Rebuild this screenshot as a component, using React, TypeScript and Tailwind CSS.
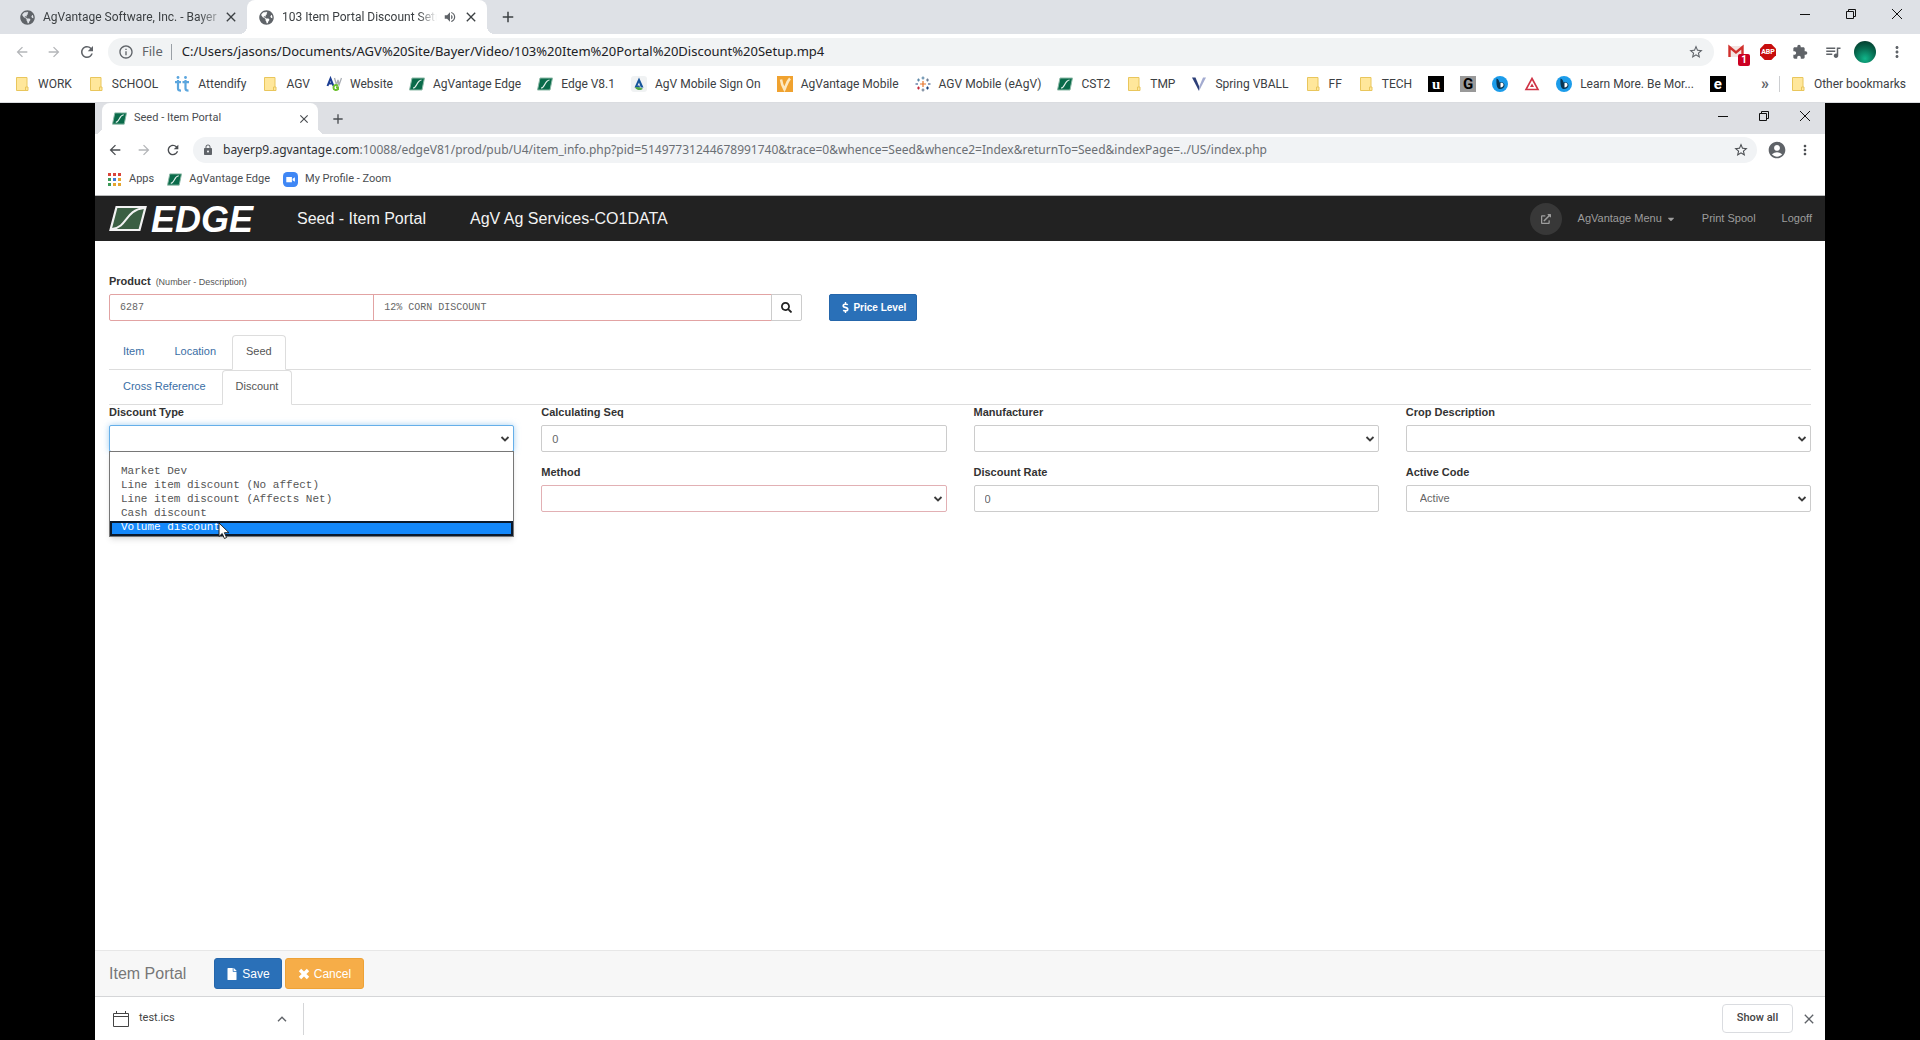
import { ReactNode } from 'react';
import {
  MdAccountCircle,
  MdAdd,
  MdArrowBack,
  MdArrowForward,
  MdClose,
  MdExtension,
  MdInfoOutline,
  MdLock,
  MdMoreVert,
  MdQueueMusic,
  MdRefresh,
  MdStarBorder,
  MdVolumeUp,
} from 'react-icons/md';
import { FaCaretDown, FaDollarSign, FaExternalLinkAlt, FaFile, FaGlobeAmericas, FaSearch } from 'react-icons/fa';

const DISCOUNT_TYPES = [
  'Market Dev',
  'Line item discount (No affect)',
  'Line item discount (Affects Net)',
  'Cash discount',
];

/* ---------- Bookmark icons ---------- */

function FolderIcon() {
  return (
    <svg viewBox="0 0 16 16" className="size-4 shrink-0">
      <path d="M2.5 1.5h10.500v9.500h1v3.500h-11.500z" fill="#ffe79b" stroke="#e9c65c" />
      <path d="M11.500 14.500v-3.500h1.500" fill="none" stroke="#e9c65c" />
    </svg>
  );
}

function EdgeIcon({ className }: { className: string }) {
  return (
    <svg viewBox="0 0 16 16" className={className}>
      <path d="M3 2h12.500l-2.500 12H.5z" fill="#0a6b4a" stroke="#8fbba9" />
      <path d="M4 12c4 0 3.500-7.500 8.500-8" fill="none" stroke="#e4f1ec" strokeWidth="1.200" />
    </svg>
  );
}

function AttendifyIcon() {
  return (
    <svg viewBox="0 0 16 16" className="size-4 shrink-0" fill="none" stroke="#5ba6de" strokeWidth="2.200">
      <path d="M4 4v8.500c0 1.500 1 2.200 3 2.200M11.500 4v8.500c0 1.500 1 2.200 3 2.200M1 6.200h6M8.500 6.200h6.500" />
      <circle cx="4" cy="1.500" r="1.400" fill="#5ba6de" stroke="none" />
      <circle cx="11.500" cy="1.500" r="1.400" fill="#5ba6de" stroke="none" />
    </svg>
  );
}

function WebsiteIcon() {
  return (
    <svg viewBox="0 0 16 16" className="size-4 shrink-0" fill="none" strokeWidth="2">
      <path d="M8.500 2l2 7 1.500-5 1 5 2.500-7" stroke="#a9adb3" strokeWidth="1.300" />
      <path d="M1.500 10L4.500 2.500 7.500 10M3 7.500h3.500" stroke="#1d3f94" />
      <path d="M12 9.500c-3-1-4.500 0-4.500 2.200s2.500 3 4.500 1.500v-1.700H10" stroke="#6cc02c" />
    </svg>
  );
}

function SignOnIcon() {
  return (
    <svg viewBox="0 0 16 16" className="size-4 shrink-0">
      <rect width="16" height="16" rx="3" fill="#f0f2f3" />
      <path d="M8 1.500l4.500 10H9.800L8 6.500l-1.500 3h2l.5 2H3.500z" fill="#17559c" />
      <path d="M4 11.500c3-1 5 0 8 1.200-2 2-6 2-8-1.200z" fill="#52a84a" />
    </svg>
  );
}

function VantageMobileIcon() {
  return (
    <svg viewBox="0 0 16 16" className="size-4 shrink-0">
      <rect width="16" height="16" fill="#f0a22f" />
      <path d="M4 3.500c.5 4 2 7.500 3.500 10C9 10.500 9.500 6 13 2.500" fill="none" stroke="#fde9c0" strokeWidth="2.500" />
    </svg>
  );
}

function SparkIcon() {
  return (
    <svg viewBox="0 0 16 16" className="size-4 shrink-0" fill="none" strokeWidth="1.200">
      <path d="M8 5v6M5 8h6" stroke="#e8762c" />
      <path d="M8 .5v3M6.500 2h3M3.500 2.500v3M2 4h3" stroke="#5c88a8" />
      <path d="M12.500 2.500v3M11 4h3M8 12.500v3M6.500 14h3" stroke="#6f7f95" />
      <path d="M3.500 10.500v3M2 12h3" stroke="#c6283c" />
      <path d="M12.500 10.500v3M11 12h3M.5 8h2.500M13 8h2.500" stroke="#1f447e" />
    </svg>
  );
}

function VballIcon() {
  return (
    <svg viewBox="0 0 16 16" className="size-4 shrink-0">
      <path d="M1 1.500h3.500L8 10v5z" fill="#2d3f78" />
      <path d="M15 1.500h-3L8 11v4z" fill="#a3abd0" />
    </svg>
  );
}

function LetterIcon({ children, className }: { children: string; className: string }) {
  return (
    <span className={`flex size-4 shrink-0 items-center justify-center leading-4 font-bold ${className}`}>
      {children}
    </span>
  );
}

function BlueIcon() {
  return (
    <svg viewBox="0 0 16 16" className="size-4 shrink-0">
      <circle cx="8" cy="8" r="8" fill="#1c9cea" />
      <path d="M4.500 2.500c1.500.5 2.500 1.500 3 4 3-1 5 .5 5 2.800S10.500 13 8 13s-4-2.500-3.500-10.500z" fill="#0a3552" />
      <path d="M8.500 7c2-.5 3 .5 3 2s-1.500 2.500-3 2.500z" fill="#fff" />
    </svg>
  );
}

function TriangleIcon() {
  return (
    <svg viewBox="0 0 16 16" className="size-4 shrink-0" fill="none" stroke="#cf3345" strokeWidth="1.600">
      <path d="M8 2.500l6 11H2z" />
      <path d="M8 7.500l2 3.500H6z" fill="#cf3345" stroke="none" />
    </svg>
  );
}

function ZoomIcon() {
  return (
    <svg viewBox="0 0 16 16" className="size-[15px] shrink-0">
      <rect width="16" height="16" rx="4.500" fill="#3f87f5" />
      <path d="M3.500 5.200h6v5.600h-6zM10.200 7.200l2.500-1.700v5l-2.500-1.700z" fill="#fff" />
    </svg>
  );
}

function AppsIcon() {
  const colors = ['#d9453a', '#d9453a', '#d9453a', '#3c9a58', '#3f7bd8', '#e5a52e', '#3c9a58', '#e5a52e', '#e5a52e'];
  return (
    <svg viewBox="0 0 15 15" className="size-[15px] shrink-0">
      {colors.map((color, i) => (
        <rect key={i} x={1 + (i % 3) * 5} y={1 + Math.floor(i / 3) * 5} width="3" height="3" fill={color} />
      ))}
    </svg>
  );
}

/* ---------- Toolbar icons ---------- */

function GmailIcon() {
  return (
    <span className="relative block size-4">
      <svg viewBox="0 0 16 16" className="size-4">
        <path d="M1 2h14v11H1z" fill="#f3e4e2" />
        <path d="M1.500 13V3L8 8.500 14.500 3v10" fill="none" stroke="#d0302c" strokeWidth="2.400" />
      </svg>
      <span className="absolute top-2.5 left-2.5 flex h-3 w-3 items-center justify-center rounded-xs bg-[#cc0022] text-[10px] leading-3 font-bold text-white">
        1
      </span>
    </span>
  );
}

function AbpIcon() {
  return (
    <span className="relative flex size-4 items-center justify-center">
      <svg viewBox="0 0 16 16" className="absolute inset-0 size-4">
        <path d="M4.700 0h6.600L16 4.700v6.600L11.300 16H4.700L0 11.300V4.700z" fill="#c70d0d" />
      </svg>
      <span className="relative text-[7px] leading-4 font-bold text-white">ABP</span>
    </span>
  );
}

function MinimizeIcon() {
  return (
    <svg viewBox="0 0 12 12" className="size-3">
      <path d="M1 6.500h10" stroke="#111" />
    </svg>
  );
}

function RestoreIcon() {
  return (
    <svg viewBox="0 0 12 12" className="size-3" fill="none" stroke="#111">
      <path d="M1.500 3.500h7v7h-7zM3.500 3.500v-2h7v7h-2" />
    </svg>
  );
}

function CrossIcon() {
  return (
    <svg viewBox="0 0 12 12" className="size-3">
      <path d="M1 1l10 10M11 1L1 11" stroke="#111" />
    </svg>
  );
}

function WindowButtons({ className }: { className: string }) {
  return (
    <div className="ml-auto flex self-start">
      <button aria-label="Minimize" className={className}><MinimizeIcon /></button>
      <button aria-label="Restore" className={className}><RestoreIcon /></button>
      <button aria-label="Close" className={className}><CrossIcon /></button>
    </div>
  );
}

/* ---------- Outer browser ---------- */

const BOOKMARKS: { icon: ReactNode; label?: string }[] = [
  { icon: <FolderIcon />, label: 'WORK' },
  { icon: <FolderIcon />, label: 'SCHOOL' },
  { icon: <AttendifyIcon />, label: 'Attendify' },
  { icon: <FolderIcon />, label: 'AGV' },
  { icon: <WebsiteIcon />, label: 'Website' },
  { icon: <EdgeIcon className="size-4 shrink-0" />, label: 'AgVantage Edge' },
  { icon: <EdgeIcon className="size-4 shrink-0" />, label: 'Edge V8.1' },
  { icon: <SignOnIcon />, label: 'AgV Mobile Sign On' },
  { icon: <VantageMobileIcon />, label: 'AgVantage Mobile' },
  { icon: <SparkIcon />, label: 'AGV Mobile (eAgV)' },
  { icon: <EdgeIcon className="size-4 shrink-0" />, label: 'CST2' },
  { icon: <FolderIcon />, label: 'TMP' },
  { icon: <VballIcon />, label: 'Spring VBALL' },
  { icon: <FolderIcon />, label: 'FF' },
  { icon: <FolderIcon />, label: 'TECH' },
  { icon: <LetterIcon className="bg-black font-['Liberation_Serif',serif] text-[15px] text-white">u</LetterIcon> },
  { icon: <LetterIcon className="bg-[#999] text-[15px] text-black">G</LetterIcon> },
  { icon: <BlueIcon /> },
  { icon: <TriangleIcon /> },
  { icon: <BlueIcon />, label: 'Learn More. Be Mor...' },
  { icon: <LetterIcon className="bg-black text-[15px] text-white">e</LetterIcon> },
];

function Bookmark({ icon, label }: { icon: ReactNode; label?: string }) {
  return (
    <a href="#" className="flex shrink-0 items-center gap-2 whitespace-nowrap">
      {icon}
      {label}
    </a>
  );
}

function OuterBrowser() {
  return (
    <header className="bg-white font-[Roboto,sans-serif] text-xs text-[#3c4043]">
      <div className="flex h-[34px] items-center bg-[#dee1e6]">
        <div className="flex w-[247px] items-center pl-5">
          <FaGlobeAmericas className="size-[15px] shrink-0 text-[#5f6368]" />
          <span className="ml-2 flex-1 overflow-hidden whitespace-nowrap [mask-image:linear-gradient(to_right,black_88%,transparent_105%)]">
            AgVantage Software, Inc. - Bayer
          </span>
          <button aria-label="Close tab" className="mr-2 ml-1"><MdClose className="size-4" /></button>
        </div>
        <div className="relative flex h-full w-60 items-center rounded-t-lg bg-white pl-3 before:absolute before:bottom-0 before:-left-2 before:size-2 before:bg-[radial-gradient(circle_at_0_0,transparent_8px,white_8px)] after:absolute after:-right-2 after:bottom-0 after:size-2 after:bg-[radial-gradient(circle_at_100%_0,transparent_8px,white_8px)]">
          <FaGlobeAmericas className="size-[15px] shrink-0 text-[#5f6368]" />
          <span className="ml-2 flex-1 overflow-hidden whitespace-nowrap [mask-image:linear-gradient(to_right,black_88%,transparent)]">
            103 Item Portal Discount Setup
          </span>
          <MdVolumeUp className="ml-1.5 size-3.5 text-[#5f6368]" />
          <button aria-label="Close tab" className="mr-2 ml-1.5"><MdClose className="size-4" /></button>
        </div>
        <button aria-label="New tab" className="ml-3"><MdAdd className="size-[18px]" /></button>
        <WindowButtons className="flex h-[34px] w-[46px] items-start justify-center pt-2" />
      </div>

      <div className="flex h-9 items-center px-3.5">
        <div className="flex gap-4 text-[#5f6368]">
          <button aria-label="Back" className="text-[#b4b6b9]"><MdArrowBack className="size-4" /></button>
          <button aria-label="Forward" className="text-[#b4b6b9]"><MdArrowForward className="size-4" /></button>
          <button aria-label="Reload"><MdRefresh className="size-[18px]" /></button>
        </div>
        <div className="ml-3 flex h-7 flex-1 items-center rounded-full bg-[#f1f3f4] px-2.5">
          <MdInfoOutline className="size-4 text-[#5f6368]" />
          <span className="ml-2 font-['Noto_Sans',sans-serif] text-[13px] text-[#5f6368]">File</span>
          <span className="ml-2 h-4 w-px bg-[#9aa0a6]" />
          <input
            aria-label="Address"
            defaultValue="C:/Users/jasons/Documents/AGV%20Site/Bayer/Video/103%20Item%20Portal%20Discount%20Setup.mp4"
            className="ml-2.5 flex-1 bg-transparent font-['Noto_Sans',sans-serif] text-[13px] text-[#202124] outline-none"
          />
          <button aria-label="Bookmark this tab"><MdStarBorder className="size-4 text-[#5f6368]" /></button>
        </div>
        <div className="ml-3.5 flex items-center gap-4 text-[#5f6368]">
          <button aria-label="Gmail"><GmailIcon /></button>
          <button aria-label="Adblock Plus"><AbpIcon /></button>
          <button aria-label="Extensions"><MdExtension className="size-4" /></button>
          <button aria-label="Media"><MdQueueMusic className="size-[18px]" /></button>
        </div>
        <button
          aria-label="Profile"
          className="ml-3 size-[22px] rounded-full bg-[radial-gradient(circle_at_50%_80%,#10b58a,#076b50_50%,#022b20)]"
        />
        <button aria-label="Menu" className="ml-3 text-[#5f6368]"><MdMoreVert className="size-[18px]" /></button>
      </div>

      <nav className="flex h-[33px] items-center gap-4 overflow-hidden border-b border-[#dadce0] px-3.5 pb-1">
        {BOOKMARKS.map((bookmark, i) => (
          <Bookmark key={i} icon={bookmark.icon} label={bookmark.label} />
        ))}
        <div className="ml-auto flex shrink-0 items-center gap-2.5">
          <button aria-label="More bookmarks" className="text-base leading-4 font-bold text-[#5f6368]">»</button>
          <span className="h-4 w-px shrink-0 bg-[#ccced1]" />
          <Bookmark icon={<FolderIcon />} label="Other bookmarks" />
        </div>
      </nav>
    </header>
  );
}

/* ---------- Inner browser ---------- */

function InnerBrowser() {
  return (
    <div className="font-[Roboto,sans-serif] text-[11px] text-[#4a4d51]">
      <div className="flex h-[31px] items-center bg-[#dee0e4] pl-[7px]">
        <div className="relative flex h-full w-[216px] items-center rounded-t-lg bg-white pl-2.5 before:absolute before:bottom-0 before:-left-[7px] before:size-[7px] before:bg-[radial-gradient(circle_at_0_0,transparent_7px,white_7px)] after:absolute after:-right-[7px] after:bottom-0 after:size-[7px] after:bg-[radial-gradient(circle_at_100%_0,transparent_7px,white_7px)]">
          <EdgeIcon className="size-[15px] shrink-0" />
          <span className="ml-[7px] flex-1">Seed - Item Portal</span>
          <button aria-label="Close tab" className="mr-[7px]"><MdClose className="size-3.5" /></button>
        </div>
        <button aria-label="New tab" className="ml-3"><MdAdd className="size-4" /></button>
        <WindowButtons className="flex h-[26px] w-[41px] items-center justify-center" />
      </div>

      <div className="flex h-8 items-center px-3">
        <div className="flex gap-[13px] text-[#4a4d51]">
          <button aria-label="Back"><MdArrowBack className="size-4" /></button>
          <button aria-label="Forward" className="text-[#b4b6b9]"><MdArrowForward className="size-4" /></button>
          <button aria-label="Reload"><MdRefresh className="size-4" /></button>
        </div>
        <div className="ml-3 flex h-[26px] flex-1 items-center rounded-full bg-[#f1f3f5] px-2">
          <MdLock className="size-3.5 shrink-0 p-px text-[#5f6368]" />
          <div
            role="textbox"
            aria-label="Address"
            className="ml-2 flex-1 overflow-hidden font-['Noto_Sans',sans-serif] text-xs whitespace-nowrap text-[#6b6f74]"
          >
            <span className="text-[#303235]">bayerp9.agvantage.com</span>
            :10088/edgeV81/prod/pub/U4/item_info.php?pid=51497731244678991740&amp;trace=0&amp;whence=Seed&amp;whence2=Index&amp;returnTo=Seed&amp;indexPage=../US/index.php
          </div>
          <button aria-label="Bookmark this tab"><MdStarBorder className="size-4" /></button>
        </div>
        <button aria-label="Account" className="ml-2.5"><MdAccountCircle className="size-5 text-[#5f6368]" /></button>
        <button aria-label="Menu" className="ml-2.5"><MdMoreVert className="size-4" /></button>
      </div>

      <nav className="flex h-[30px] items-center gap-[13px] border-b border-[#b9babb] px-3 pb-[3px]">
        <a href="#" className="flex items-center gap-[7px]"><AppsIcon />Apps</a>
        <a href="#" className="flex items-center gap-[7px]"><EdgeIcon className="size-[15px] shrink-0" />AgVantage Edge</a>
        <a href="#" className="flex items-center gap-[7px]"><ZoomIcon />My Profile - Zoom</a>
      </nav>
    </div>
  );
}

/* ---------- Item portal ---------- */

function PortalNav() {
  return (
    <nav className="flex h-[45px] items-center bg-[#222] pr-[13px] pl-3.5 text-[11px] text-[#9d9d9d]">
      <a href="#" className="flex items-center text-white">
        <svg viewBox="0 0 38 27" className="h-[27px] w-[38px]">
          <path d="M7.500 2h29l-6 23H1.500z" fill="#3b5f43" stroke="#f2f2f2" strokeWidth="2.200" />
          <path d="M3 24C19 22 16 5 35 3" fill="none" stroke="#f2f2f2" strokeWidth="2" />
        </svg>
        <span className="ml-1 pt-0.5 text-4xl leading-10 font-bold italic">EDGE</span>
      </a>
      <span className="ml-11 text-base text-[#f3f3f3]">Seed - Item Portal</span>
      <span className="ml-11 text-base text-[#f3f3f3]">AgV Ag Services-CO1DATA</span>
      <button aria-label="Open in new window" className="ml-auto flex size-8 items-center justify-center rounded-full bg-[#383838]">
        <FaExternalLinkAlt className="size-2.5" />
      </button>
      <a href="#" className="ml-4 flex items-center gap-1">AgVantage Menu <FaCaretDown className="size-2.5" /></a>
      <a href="#" className="ml-[26px]">Print Spool</a>
      <a href="#" className="ml-[26px]">Logoff</a>
    </nav>
  );
}

function Tabs({ items, active }: { items: string[]; active: string }) {
  return (
    <div role="tablist" className="flex h-[35px] gap-0.5 border-b border-[#ddd]">
      {items.map((item) => (
        <button
          key={item}
          role="tab"
          aria-selected={item === active}
          className={`-mb-px rounded-t border px-[13px] pb-0.5 ${
            item === active ? 'border-[#ddd] border-b-white bg-white text-[#555]' : 'border-transparent text-[#3a6ea5]'
          }`}
        >
          {item}
        </button>
      ))}
    </div>
  );
}

function Field({ id, label, children }: { id: string; label: string; children: ReactNode }) {
  return (
    <div className="relative">
      <label htmlFor={id} className="mb-1.5 block leading-3.5 font-bold text-[#333]">{label}</label>
      {children}
    </div>
  );
}

function TextInput({ id, value }: { id: string; value: string }) {
  return (
    <input id={id} defaultValue={value} className="h-[27px] w-full rounded-xs border border-[#ccc] px-2.5 text-[#666] outline-none" />
  );
}

function SelectInput({ id, value, className }: { id: string; value?: string; className: string }) {
  return (
    <div className="relative">
      <select id={id} className={`h-[27px] w-full appearance-none rounded-xs border bg-white px-[13px] text-[#666] outline-none ${className}`}>
        <option>{value}</option>
      </select>
      <svg viewBox="0 0 10 6" className="pointer-events-none absolute top-[11px] right-1 h-1.5 w-2.5">
        <path d="M1.500 1L5 4.500 8.500 1" fill="none" stroke="#3c3c3c" strokeWidth="1.800" />
      </svg>
    </div>
  );
}

function DiscountTypeList() {
  return (
    <ul
      role="listbox"
      aria-label="Discount Type"
      className="absolute inset-x-0 top-full z-10 -mt-px border border-[#777] bg-white pt-3 font-['Liberation_Mono',monospace] leading-3.5 text-[#555] shadow-md"
    >
      {DISCOUNT_TYPES.map((type) => (
        <li key={type} role="option" aria-selected={false} className="px-[11px]">{type}</li>
      ))}
      <li
        role="option"
        aria-selected
        className="mt-px h-[15px] overflow-hidden border-2 border-[#0b1a2c] bg-[#1488fa] px-[9px] leading-2 text-white"
      >
        Volume discount
      </li>
      <svg viewBox="0 0 12 18" className="absolute -bottom-1 left-[108px] h-[18px] w-3">
        <path d="M1 1v13.500l3.200-3 2.200 5 2.200-1-2.200-4.800H11z" fill="#fff" stroke="#222" />
      </svg>
    </ul>
  );
}

function ItemPortal() {
  return (
    <main className="flex-1 px-3.5 pt-[31px] text-[11px]">
      <label htmlFor="product" className="block h-[18px] leading-[18px] font-bold text-[#333]">
        Product <span className="ml-0.5 text-[9px] font-normal text-[#555]">(Number - Description)</span>
      </label>
      <div className="mt-1 -mr-[27px] flex h-[27px]">
        <div className="grid w-5/12 grid-cols-[2fr_3fr_30px] pr-[27px] font-['Liberation_Mono',monospace] text-[10px] text-[#666]">
          <input
            id="product"
            defaultValue="6287"
            className="min-w-0 rounded-l-xs border border-[#e2a3a3] px-2.5 outline-none"
          />
          <input
            aria-label="Description"
            defaultValue="12% CORN DISCOUNT"
            className="-ml-px min-w-0 border border-[#e2a3a3] px-2.5 outline-none"
          />
          <button aria-label="Search" className="-ml-px flex items-center justify-center rounded-r-xs border border-[#ccc]">
            <FaSearch className="size-[11px] text-[#222]" />
          </button>
        </div>
        <button className="flex items-center gap-0.5 rounded-xs border border-[#2566ab] bg-[#2a70b8] px-2.5 text-[10px] font-bold text-white">
          <FaDollarSign className="size-[11px]" />
          Price Level
        </button>
      </div>

      <div className="mt-3.5">
        <Tabs items={['Item', 'Location', 'Seed']} active="Seed" />
        <Tabs items={['Cross Reference', 'Discount']} active="Discount" />
      </div>

      <form className="grid grid-cols-4 gap-x-[27px] gap-y-[13px]">
        <Field id="discount-type" label="Discount Type">
          <SelectInput id="discount-type" className="border-[#66afe9] shadow-[0_0_6px_#66afe999]" />
          <DiscountTypeList />
        </Field>
        <Field id="calculating-seq" label="Calculating Seq">
          <TextInput id="calculating-seq" value="0" />
        </Field>
        <Field id="manufacturer" label="Manufacturer">
          <SelectInput id="manufacturer" className="border-[#ccc]" />
        </Field>
        <Field id="crop-description" label="Crop Description">
          <SelectInput id="crop-description" className="border-[#ccc]" />
        </Field>
        <div className="col-start-2">
          <Field id="method" label="Method">
            <SelectInput id="method" className="border-[#e2b0b4]" />
          </Field>
        </div>
        <Field id="discount-rate" label="Discount Rate">
          <TextInput id="discount-rate" value="0" />
        </Field>
        <Field id="active-code" label="Active Code">
          <SelectInput id="active-code" value="Active" className="border-[#ccc]" />
        </Field>
      </form>
    </main>
  );
}

function ActionBar() {
  return (
    <div className="flex h-[46px] items-center border-t border-[#e7e7e7] bg-[#f7f7f7] pl-3.5 text-xs text-white">
      <span className="text-base text-[#777]">Item Portal</span>
      <button className="ml-7 flex h-[31px] items-center gap-1 rounded-[3px] border border-[#2566ab] bg-[#2a70b8] px-[11px]">
        <FaFile className="size-3" />
        Save
      </button>
      <button className="ml-[3px] flex h-[31px] items-center gap-1 rounded-[3px] border border-[#eea236] bg-[#f6ad48] px-3">
        <svg viewBox="0 0 12 12" className="size-3">
          <path d="M2 2l8 8M10 2l-8 8" stroke="#fff" strokeWidth="3.400" />
        </svg>
        Cancel
      </button>
    </div>
  );
}

function DownloadBar() {
  return (
    <div className="flex h-11 items-center border-t border-[#d5d6d8] bg-white pr-2 font-[Roboto,sans-serif] text-[11px] text-[#444]">
      <button className="flex h-8 w-[209px] items-center border-r border-[#d5d6d8] pr-4 pl-[18px]">
        <svg viewBox="0 0 16 16" className="size-4" fill="none" stroke="#444">
          <path d="M.5 2.500h15v13H.5zM.5 5.500h15M3.500 0v2.500M12.500 0v2.500" />
        </svg>
        <span className="ml-2.5">test.ics</span>
        <svg viewBox="0 0 10 6" className="ml-auto h-1.5 w-2.5">
          <path d="M1 5.200L5 1.200 9 5.200" fill="none" stroke="#5f6368" strokeWidth="1.400" />
        </svg>
      </button>
      <button className="mr-2 ml-auto h-[29px] w-[71px] rounded border border-[#dadce0] font-medium">Show all</button>
      <button aria-label="Close downloads"><MdClose className="size-4 text-[#5f6368]" /></button>
    </div>
  );
}

export default function App() {
  return (
    <div className="flex min-h-screen flex-col bg-black">
      <OuterBrowser />
      <div className="mx-[95px] flex flex-1 flex-col bg-white font-['Liberation_Sans',sans-serif]">
        <InnerBrowser />
        <PortalNav />
        <ItemPortal />
        <ActionBar />
        <DownloadBar />
      </div>
    </div>
  );
}
